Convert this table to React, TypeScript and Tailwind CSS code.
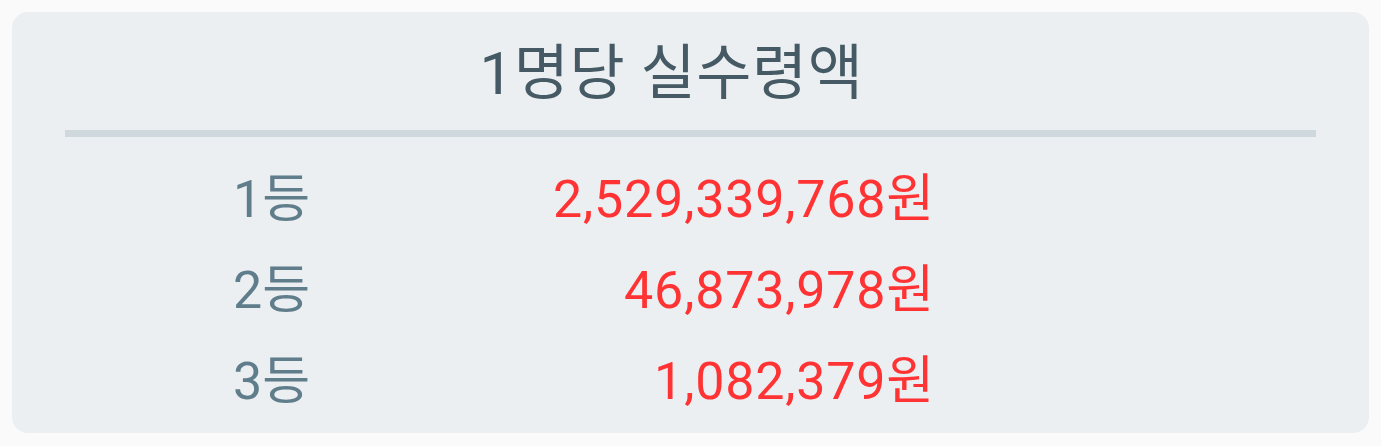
export default function App() {
  const rows = [
    ["1등", "2,529,339,768원"],
    ["2등", "46,873,978원"],
    ["3등", "1,082,379원"],
  ];
  return (
    <div
      className="w-[1381px] h-[446px] bg-[#fafafa] pt-[12px] px-[12px]"
      style={{ fontFamily: 'Roboto, "Noto Sans CJK KR", sans-serif' }}
    >
      <div className="h-[421px] rounded-[16px] bg-[#eceff1] flex flex-col">
        <div className="pt-[32px] pr-[38px] text-center text-[60px] leading-[60px] tracking-[0.5px] text-[#455a64]">
          1명당 실수령액
        </div>
        <div className="mx-[53px] mt-[26px] h-[7px] bg-[#cfd8dc]" />
        <div className="mt-[17px] flex flex-col pl-[221px]">
          {rows.map(([label, value]) => (
            <div key={label} className="flex text-[52px] leading-[91px]">
              <div className="w-[200px] text-[#607d8b]">{label}</div>
              <div className="w-[502px] text-right tracking-[0.8px] text-[#ff3333]">{value}</div>
            </div>
          ))}
        </div>
      </div>
    </div>
  );
}
